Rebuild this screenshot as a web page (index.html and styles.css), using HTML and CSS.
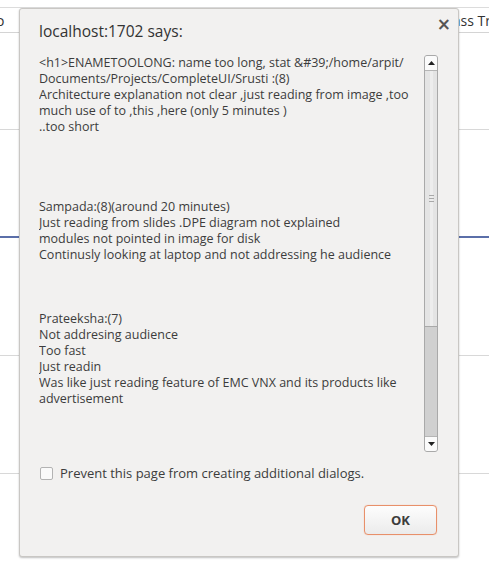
FILE: index.html
```html
<!DOCTYPE html>
<html>
<head>
<meta charset="utf-8">
<link rel="stylesheet" href="styles.css">
</head>
<body>
<div class="page">
  <div class="nav">
    <span class="nav-left">o</span>
    <span class="nav-right">ass Tr</span>
  </div>
  <div class="row r1"></div>
  <div class="row r2 blue"></div>
  <div class="row r3"></div>
  <div class="row r4"></div>
</div>

<div class="dialog">
  <div class="close">×</div>
  <div class="title">localhost:1702 says:</div>
  <div class="body">
    <div class="message">&lt;h1&gt;ENAMETOOLONG: name too long, stat &amp;#39;/home/arpit/<br>Documents/Projects/CompleteUI/Srusti :(8)<br>Architecture explanation not clear ,just reading from image ,too<br>much use of to ,this ,here (only 5 minutes )<br>..too short<br><br><br><br><br>Sampada:(8)(around 20 minutes)<br>Just reading from slides .DPE diagram not explained<br>modules not pointed in image for disk<br>Continusly looking at laptop and not addressing he audience<br><br><br><br>Prateeksha:(7)<br>Not addresing audience<br>Too fast<br>Just readin<br>Was like just reading feature of EMC VNX and its products like<br>advertisement</div>
    <div class="scrollbar">
      <div class="arrow up"><svg width="7" height="4" viewBox="0 0 7 4"><path d="M0 4 L3.5 0 L7 4 Z" fill="#222"/></svg></div>
      <div class="thumb"><div class="grip"><i></i><i></i><i></i></div></div>
      <div class="track"></div>
      <div class="arrow down"><svg width="7" height="4" viewBox="0 0 7 4"><path d="M0 0 L3.5 4 L7 0 Z" fill="#222"/></svg></div>
    </div>
  </div>
  <label class="check"><span class="box"></span><span class="label">Prevent this page from creating additional dialogs.</span></label>
  <div class="actions"><button class="ok">OK</button></div>
</div>
</body>
</html>
```
FILE: styles.css
```css
html, body {
  margin: 0;
  padding: 0;
  background: #ffffff;
  width: 489px;
  height: 575px;
  overflow: hidden;
  font-family: "Open Sans", "DejaVu Sans", sans-serif;
}

.page {
  padding-top: 7px;
}

.nav {
  border-top: 1px solid #dcdcdc;
  border-bottom: 1px solid #d4d4d4;
  height: 24px;
  display: flex;
  justify-content: space-between;
  align-items: center;
  font-size: 14px;
  color: #333;
}

.nav-left {
  margin-left: -4px;
}

.nav-right {
  margin-right: -2px;
}

.row {
  border-bottom: 1px solid #d8d8d8;
}

.r1 { height: 96px; }
.r2 { height: 106px; }
.r2.blue { border-bottom: 2px solid #5b6fa9; }
.r3 { height: 117px; }
.r4 { height: 117px; }

.dialog {
  position: absolute;
  left: 19px;
  top: 8px;
  width: 438px;
  height: 547px;
  background: #f2f1f0;
  border: 1px solid #c9c7c4;
  border-radius: 3px;
  box-shadow: 0 1px 2px rgba(0,0,0,0.25);
  color: #3c3c3c;
  display: flex;
  flex-direction: column;
  box-sizing: content-box;
}

.close {
  position: absolute;
  right: 7px;
  top: 5px;
  font-size: 17px;
  font-weight: bold;
  color: #555;
  font-family: "DejaVu Sans", sans-serif;
}

.title {
  font-size: 15.5px;
  margin: 11px 0 0 19px;
  height: 22px;
  line-height: 22px;
  color: #333;
}

.body {
  display: flex;
  margin: 13px 0 0 19px;
  height: 397px;
}

.message {
  width: 385px;
  font-size: 12.5px;
  line-height: 16px;
  white-space: nowrap;
  overflow: hidden;
}

.scrollbar {
  width: 14px;
  height: 397px;
  border: 1px solid #a9a9a9;
  border-radius: 3px;
  background: #d0d0d0;
  display: flex;
  flex-direction: column;
  box-sizing: border-box;
  overflow: hidden;
}

.arrow {
  height: 14px;
  background: #fbfbfb;
  display: flex;
  align-items: center;
  justify-content: center;
  flex: none;
}

.arrow.up { border-bottom: 1px solid #b5b5b5; }
.arrow.down { border-top: 1px solid #b5b5b5; }

.thumb {
  height: 255px;
  background: linear-gradient(to right, #e4e4e4 0, #e4e4e4 5px, #ededed 5px, #ededed 8px, #e4e4e4 8px);
  border-bottom: 1px solid #a9a9a9;
  display: flex;
  align-items: center;
  justify-content: center;
  flex: none;
}

.grip {
  display: flex;
  flex-direction: column;
  gap: 2px;
}

.grip i {
  display: block;
  width: 5px;
  height: 1px;
  background: #a8a8a8;
}

.track {
  flex: 1;
}

.check {
  display: flex;
  align-items: center;
  margin: 12px 0 0 20px;
  font-size: 13px;
  color: #3c3c3c;
}

.box {
  width: 13px;
  height: 13px;
  border: 1px solid #b3b3b3;
  border-radius: 2px;
  background: #fafafa;
  box-sizing: border-box;
  margin-right: 7px;
}

.actions {
  display: flex;
  justify-content: flex-end;
  margin: 23px 21px 0 0;
}

.ok {
  width: 73px;
  height: 30px;
  border: 1px solid #e8906a;
  border-radius: 4px;
  background: linear-gradient(to bottom, #fdfdfd, #ebebeb);
  box-shadow: 0 0 1px #f0b090;
  font-family: "Open Sans", "DejaVu Sans", sans-serif;
  font-weight: bold;
  font-size: 13px;
  color: #3c3c3c;
  padding: 0;
}
```
